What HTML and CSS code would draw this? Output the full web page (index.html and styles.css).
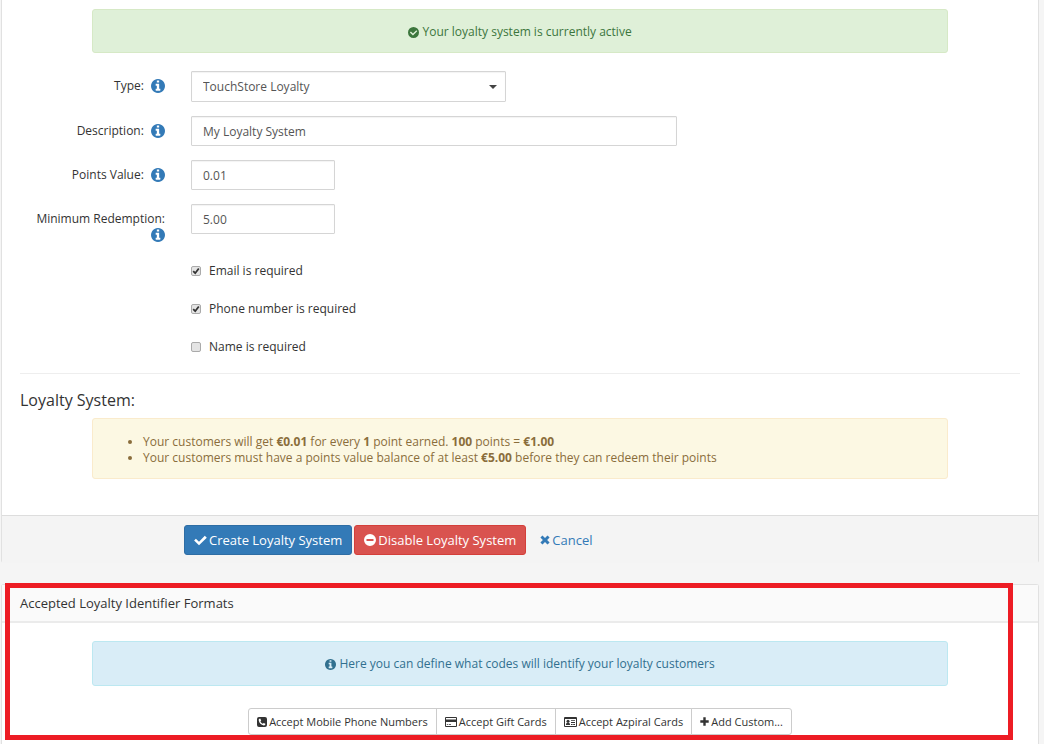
FILE: index.html
```html
<!DOCTYPE html>
<html lang="en">
<head>
<meta charset="utf-8">
<title>Loyalty System</title>
<link rel="stylesheet" href="styles.css">
</head>
<body>
<svg class="sprite" aria-hidden="true">
  <symbol id="info" viewBox="0 128 1536 1536"><path d="M1024 1376v-160q0-14-9-23t-23-9h-96v-512q0-14-9-23t-23-9h-320q-14 0-23 9t-9 23v160q0 14 9 23t23 9h96v320h-96q-14 0-23 9t-9 23v160q0 14 9 23t23 9h448q14 0 23-9t9-23zm-128-896v-160q0-14-9-23t-23-9h-192q-14 0-23 9t-9 23v160q0 14 9 23t23 9h192q14 0 23-9t9-23zm640 416q0 209-103 385.5t-279.5 279.5-385.5 103-385.5-103-279.5-279.5-103-385.5 103-385.5 279.5-279.5 385.5-103 385.5 103 279.5 279.5 103 385.5z"/></symbol>
  <symbol id="check-circle" viewBox="0 0 12 12"><path fill-rule="evenodd" d="M6 0a6 6 0 1 1 0 12A6 6 0 0 1 6 0zM10.1 4.7 9.1 3.6 5.4 7.2 3.2 5 2 6.100 5.400 9.400z"/></symbol>
  <symbol id="check" viewBox="0 0 13 12"><path d="M1.900 4.700 5 7.700 10.800 1.700 12.800 3.700 5 11.300.1 6.600z"/></symbol>
  <symbol id="minus-circle" viewBox="0 0 12 12"><path fill-rule="evenodd" d="M6 0a6 6 0 1 1 0 12A6 6 0 0 1 6 0zM2.500 5v2h7V5z"/></symbol>
  <symbol id="times" viewBox="0 0 10 10"><path d="M2.500.5 5 3 7.500.5 9.600 2.500 7.100 5 9.600 7.500 7.500 9.500 5 7 2.500 9.500.4 7.500 2.900 5 .4 2.500z"/></symbol>
  <symbol id="phone" viewBox="0 0 10 10"><path fill-rule="evenodd" d="M2 0h6a2 2 0 0 1 2 2v6a2 2 0 0 1-2 2H2a2 2 0 0 1-2-2V2a2 2 0 0 1 2-2zM3.200 1.500C2.200 1.700 1.600 2.400 1.700 3.200 2.200 5.900 4.100 7.900 6.800 8.400 7.700 8.500 8.400 7.800 8.400 6.800L6.700 5.900 5.800 6.700C4.600 6.100 3.800 5.400 3.400 4.300L4.200 3.500z"/></symbol>
  <symbol id="card" viewBox="0 0 12 10"><path fill-rule="evenodd" d="M1 0h10a1 1 0 0 1 1 1v8a1 1 0 0 1-1 1H1a1 1 0 0 1-1-1V1a1 1 0 0 1 1-1zM1 1v1.500h10V1zM1 5v4h10V5zM1.800 7.200h1.500V8H1.800zM4 7.200h2V8H4z"/></symbol>
  <symbol id="id-card" viewBox="0 0 13 10"><path fill-rule="evenodd" d="M1 0h11a1 1 0 0 1 1 1v8a1 1 0 0 1-1 1H1a1 1 0 0 1-1-1V1a1 1 0 0 1 1-1zM1 2v7h11V2z"/><circle cx="4" cy="4.200" r="1.500"/><path d="M1.900 8c0-1.600.7-2.500 2.100-2.500S6.100 6.400 6.100 8zM7 3.200h4v.9H7zM7 5.100h4V6H7zM7 7h1.600v.9H7zM9.200 7H11v.9H9.200z"/></symbol>
  <symbol id="plus" viewBox="0 0 9 9"><path d="M3.300.3h2.400v3h3v2.400h-3v3H3.300v-3h-3V3.300h3z"/></symbol>
</svg>

<form class="panel">
  <div class="panel-body">
    <div class="alert alert-success"><svg class="icon icon-sm"><use href="#check-circle"/></svg> Your loyalty system is currently active</div>

    <div class="row row-select">
      <label for="type">Type: <svg class="icon help"><use href="#info"/></svg></label>
      <div class="select-wrap">
        <select id="type" class="field"><option>TouchStore Loyalty</option></select>
      </div>
    </div>
    <div class="row">
      <label for="description">Description: <svg class="icon help"><use href="#info"/></svg></label>
      <input id="description" class="field field-wide" type="text" value="My Loyalty System">
    </div>
    <div class="row">
      <label for="points">Points Value: <svg class="icon help"><use href="#info"/></svg></label>
      <input id="points" class="field field-short" type="text" value="0.01">
    </div>
    <div class="row">
      <label for="minimum">Minimum Redemption: <svg class="icon help"><use href="#info"/></svg></label>
      <input id="minimum" class="field field-short" type="text" value="5.00">
    </div>

    <div class="checks">
      <label class="check"><input type="checkbox" checked> Email is required</label>
      <label class="check"><input type="checkbox" checked> Phone number is required</label>
      <label class="check"><input type="checkbox"> Name is required</label>
    </div>

    <hr>
    <h4>Loyalty System:</h4>
    <div class="alert alert-warning">
      <ul>
        <li>Your customers will get <b>€0.01</b> for every <b>1</b> point earned. <b>100</b> points = <b>€1.00</b></li>
        <li>Your customers must have a points value balance of at least <b>€5.00</b> before they can redeem their points</li>
      </ul>
    </div>
  </div>
  <div class="panel-footer">
    <button type="button" class="btn btn-primary"><svg class="icon icon-check"><use href="#check"/></svg>Create Loyalty System</button>
    <button type="button" class="btn btn-danger"><svg class="icon icon-md"><use href="#minus-circle"/></svg>Disable Loyalty System</button>
    <a href="#" class="btn btn-link"><svg class="icon icon-xs"><use href="#times"/></svg>Cancel</a>
  </div>
</form>

<section class="panel formats">
  <h3 class="panel-heading">Accepted Loyalty Identifier Formats</h3>
  <div class="panel-body">
    <div class="alert alert-info"><svg class="icon icon-sm"><use href="#info"/></svg> Here you can define what codes will identify your loyalty customers</div>
    <div class="btn-group">
      <button type="button" class="btn-sm"><svg class="icon icon-xs"><use href="#phone"/></svg>Accept Mobile Phone Numbers</button>
      <button type="button" class="btn-sm"><svg class="icon icon-card"><use href="#card"/></svg>Accept Gift Cards</button>
      <button type="button" class="btn-sm"><svg class="icon icon-id"><use href="#id-card"/></svg>Accept Azpiral Cards</button>
      <button type="button" class="btn-sm"><svg class="icon icon-plus"><use href="#plus"/></svg>Add Custom...</button>
    </div>
  </div>
  <div class="highlight"></div>
</section>
</body>
</html>
```

FILE: styles.css
```css
* {
  box-sizing: border-box;
}

body {
  margin: 0;
  padding: 0 5px 0 1px;
  min-height: 100vh;
  display: flex;
  flex-direction: column;
  gap: 21px;
  background: #f5f5f5;
  color: #333;
  font: 12px/16px "Open Sans", sans-serif;
}

.sprite {
  position: absolute;
  width: 0;
  height: 0;
}

.icon {
  flex: none;
  fill: currentColor;
}

.icon-sm {
  width: 11px;
  height: 11px;
  vertical-align: -2px;
}

.icon-xs {
  width: 10px;
  height: 10px;
}

.icon-md {
  width: 12px;
  height: 12px;
}

.icon-check {
  width: 13px;
  height: 12px;
}

.icon-card {
  width: 12px;
  height: 10px;
}

.icon-id {
  width: 13px;
  height: 10px;
}

.icon-plus {
  width: 9px;
  height: 9px;
}

.panel {
  background: #fff;
  border: 1px solid #e1e1e1;
  border-top: 0;
  border-bottom: 0;
  border-radius: 0 0 3px 3px;
}

.panel-body {
  padding: 9px 18px 36px;
}

.alert {
  margin: 0 72px;
  border: 1px solid;
  border-radius: 3px;
  padding: 14px 14px 13px;
  text-align: center;
}

.alert-success {
  margin-bottom: 18px;
  padding: 14px 14px 12px;
  color: #3c763d;
  background: #dff0d8;
  border-color: #d6e9c6;
}

.alert-warning {
  padding: 15px 14px 12px;
  color: #8a6d3b;
  background: #fcf8e3;
  border-color: #faebcc;
  text-align: left;
}

.alert-warning ul {
  margin: 0;
  padding: 0 0 0 36px;
}

.alert-info {
  margin-bottom: 22px;
  color: #31708f;
  background: #d9edf7;
  border-color: #bce8f1;
}

.row {
  display: grid;
  grid-template-columns: 145px 1fr;
  column-gap: 26px;
  height: 30px;
  margin-bottom: 14px;
}

.row-select {
  height: 31px;
}

.row > label {
  padding-top: 7px;
  text-align: right;
}

.help {
  width: 14px;
  height: 14px;
  margin-left: 4px;
  vertical-align: -3px;
  color: #337ab7;
}

.field {
  height: 30px;
  border: 1px solid #d5d5d5;
  border-radius: 1px;
  padding: 0 11px;
  background: #fff;
  box-shadow: inset 0 1px 1px #0000000d;
  color: #555;
  font: inherit;
}

.field-wide {
  width: 486px;
}

.field-short {
  width: 144px;
}

.select-wrap {
  position: relative;
  width: 315px;
}

.select-wrap .field {
  width: 100%;
  height: 31px;
  appearance: none;
}

.select-wrap::after {
  content: "";
  position: absolute;
  right: 9px;
  top: 14px;
  border: 4px solid transparent;
  border-top-color: #444;
  border-bottom: 0;
  pointer-events: none;
}

.checks {
  display: flex;
  flex-direction: column;
  align-items: flex-start;
  gap: 22px;
  padding: 15px 0 18px 171px;
}

.check {
  display: flex;
  align-items: center;
  gap: 8px;
}

.check input {
  appearance: none;
  width: 10px;
  height: 10px;
  margin: 0;
  border: 1px solid #aaa;
  border-radius: 2px;
  background: #e4e4e4;
}

.check input:checked {
  background: #e4e4e4 url("data:image/svg+xml,%3Csvg xmlns='http://www.w3.org/2000/svg' viewBox='0 0 8 8'%3E%3Cpath d='M1.200 4.200 3.200 6.200 6.800 1.500' fill='none' stroke='%23333' stroke-width='1.800'/%3E%3C/svg%3E");
}

hr {
  margin: 0 0 16px;
  border: 0;
  border-top: 1px solid #eee;
}

h4 {
  margin: 0 0 8px;
  font-size: 16px;
  font-weight: 400;
  line-height: 20px;
}

.panel-footer {
  display: flex;
  gap: 2px;
  padding: 9px 18px 8px 182px;
  border-top: 1px solid #ddd;
  background: #f4f4f4;
}

.btn {
  display: flex;
  align-items: center;
  gap: 2px;
  height: 30px;
  padding: 0 9px;
  border: 1px solid transparent;
  border-radius: 3px;
  color: #fff;
  font: 13px/18px "Open Sans", sans-serif;
  text-decoration: none;
}

.btn-primary {
  background: #337ab7;
  border-color: #2e6da4;
}

.btn-danger {
  background: #d9534f;
  border-color: #d43f3a;
}

.btn-link {
  padding: 0 11px;
  color: #337ab7;
}

.formats {
  position: relative;
  flex: 1;
  border-top: 1px solid #e1e1e1;
  border-radius: 3px 3px 0 0;
}

.panel-heading {
  margin: 0;
  padding: 9px 18px;
  border-bottom: 2px solid #ebebeb;
  background: #fafafa;
  font-size: 13px;
  font-weight: 400;
  line-height: 18px;
}

.formats .panel-body {
  padding: 18px 18px 8px;
}

.btn-group {
  display: flex;
  justify-content: center;
}

.btn-sm {
  display: flex;
  align-items: center;
  gap: 2px;
  height: 27px;
  padding: 0 8px;
  border: 1px solid #ccc;
  background: #fff;
  color: #333;
  font: 11px/16px "Open Sans", sans-serif;
}

.btn-sm + .btn-sm {
  margin-left: -1px;
}

.btn-sm:first-child {
  border-radius: 3px 0 0 3px;
}

.btn-sm:last-child {
  border-radius: 0 3px 3px 0;
}

.highlight {
  position: absolute;
  inset: -2px 25px 4px 3px;
  border: 5px solid #ed1c24;
  pointer-events: none;
}
```
